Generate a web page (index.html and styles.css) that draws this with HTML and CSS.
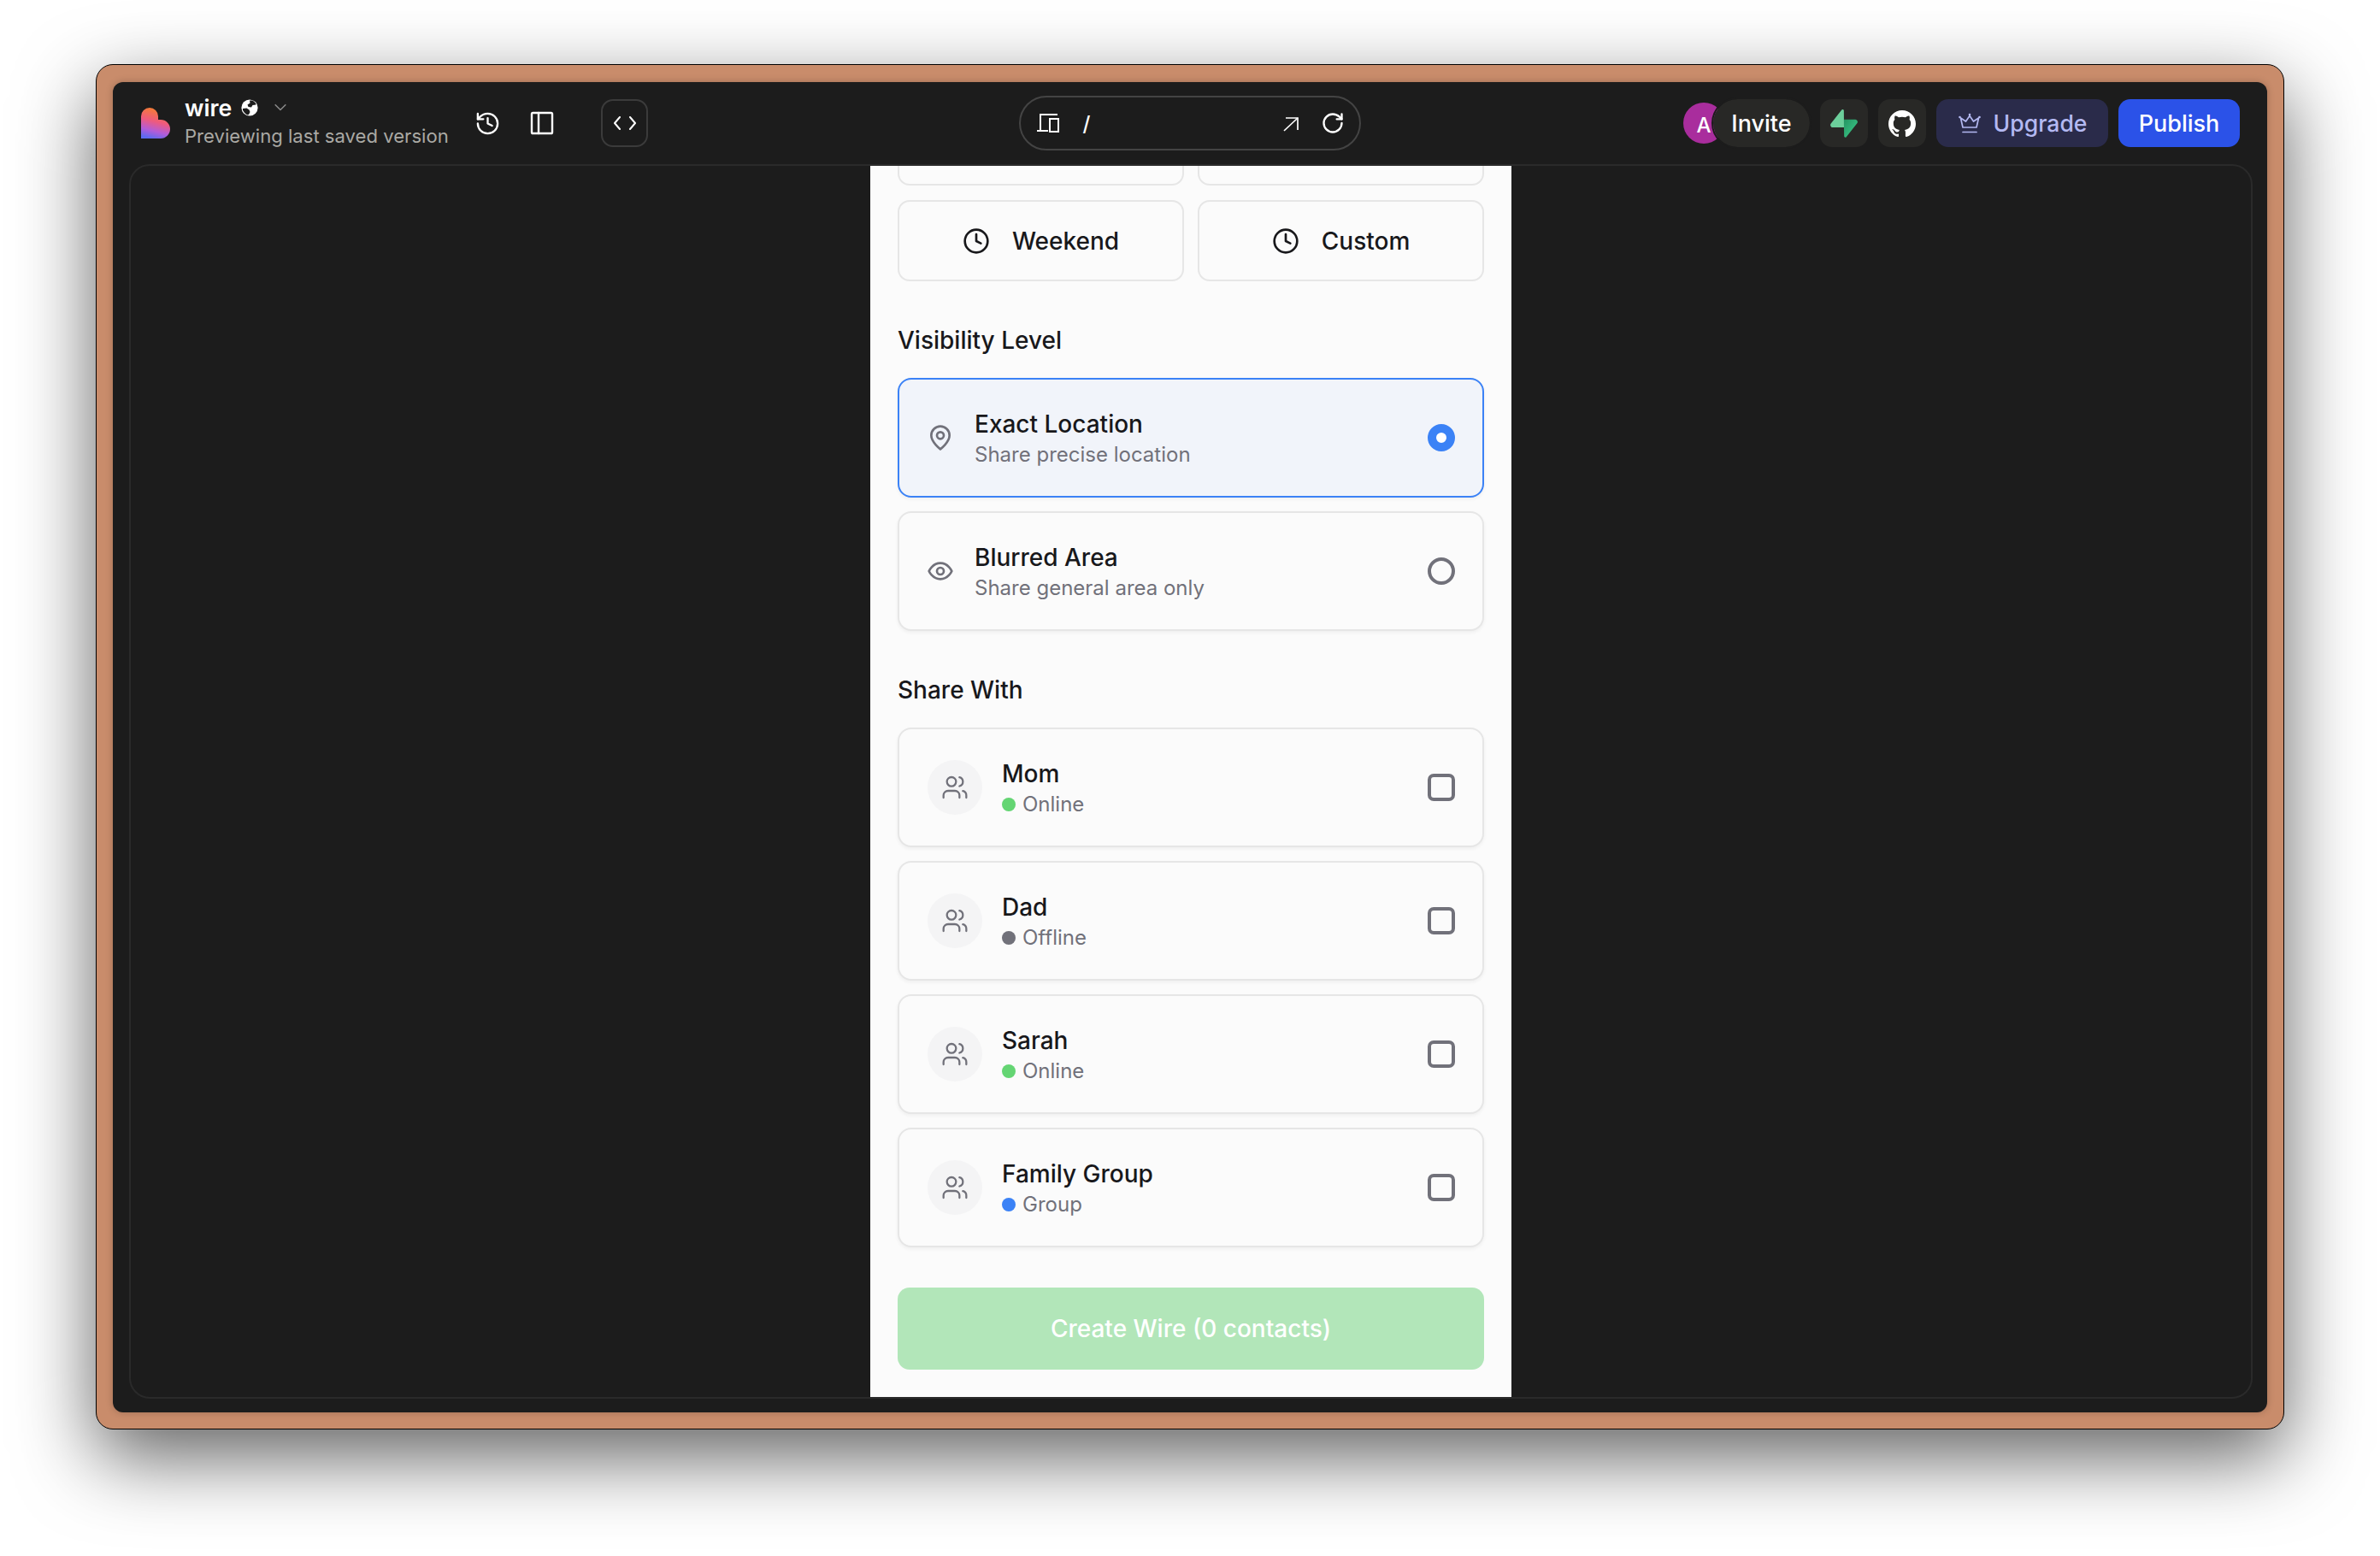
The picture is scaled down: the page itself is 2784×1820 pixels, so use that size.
FILE: index.html
```html
<!DOCTYPE html>
<html lang="en">
<head>
    <meta charset="UTF-8">
    <title>wire</title>
    <link rel="stylesheet" href="styles.css">
</head>
<body>
    <div class="window">
        <div class="inner">

            <header class="topbar">
                <div class="left-group">
                    <svg class="logo" viewBox="0 0 34 36">
                        <defs>
                            <linearGradient id="logograd" x1="0.6" y1="0" x2="0.35" y2="1">
                                <stop offset="0" stop-color="#f5812b"/>
                                <stop offset="0.45" stop-color="#ee5a7e"/>
                                <stop offset="0.75" stop-color="#b35cd8"/>
                                <stop offset="1" stop-color="#5d6af0"/>
                            </linearGradient>
                        </defs>
                        <path fill="url(#logograd)" d="M0 10a10 10 0 0 1 20 0v4h3a11 11 0 0 1 11 11c0 6-5 11-11 11H0Z"/>
                    </svg>
                    <div class="project">
                        <div class="project-name">
                            <span class="name">wire</span>
                            <svg class="globe" viewBox="0 0 20 20">
                                <circle cx="10" cy="10" r="9.600" fill="#fff"/>
                                <path fill="#1c1c1c" d="M10 1.500h3.500L17 4.500 17.500 6.500 13.500 7 12 9.500 8.500 9 7.500 6.500 10.500 4.500ZM2 11l4.500-.5 3 2L10.500 15 9 18l-2 .5-3-2.500-2-3Z"/>
                            </svg>
                            <svg class="icon chevron" viewBox="0 0 24 24"><path d="m5 8 7 7 7-7"/></svg>
                        </div>
                        <div class="project-status">Previewing last saved version</div>
                    </div>
                    <svg class="icon history" viewBox="0 0 24 24">
                        <path d="M3 12a9 9 0 1 0 9-9 9.750 9.750 0 0 0-6.740 2.740L3 8"/>
                        <path d="M3 3v5h5"/>
                        <path d="M12 7v5l4 2"/>
                    </svg>
                    <svg class="icon panel" viewBox="0 0 24 24">
                        <rect x="3" y="3" width="18" height="18" rx="1"/>
                        <path d="M9 3v18"/>
                    </svg>
                    <button class="code-btn">
                        <svg class="icon" viewBox="0 0 26 16"><path d="M7 1 1 8l6 7"/><path d="m19 1 6 7-6 7"/></svg>
                    </button>
                </div>

                <div class="address">
                    <svg class="icon devices" viewBox="0 0 28 22">
                        <path d="M25 1H5v19"/>
                        <path d="M1 20h13"/>
                        <rect x="16" y="6" width="10" height="15"/>
                    </svg>
                    <span class="slash">/</span>
                    <span class="address-fill"></span>
                    <svg class="icon arrow" viewBox="0 0 24 24"><path d="M6 6h14v14"/><path d="M4 21 20 6"/></svg>
                    <svg class="icon reload" viewBox="0 0 24 24">
                        <path d="M21 12a9 9 0 1 1-9-9c2.520 0 4.930 1 6.740 2.740L21 8"/>
                        <path d="M21 3v5h-5"/>
                    </svg>
                </div>

                <div class="right-group">
                    <div class="people">
                        <span class="avatar">A</span>
                        <button class="invite">Invite</button>
                    </div>
                    <button class="square-btn">
                        <svg class="brand" viewBox="0 0 109 113">
                            <defs>
                                <linearGradient id="boltgrad" x1="0" y1="0" x2="1" y2="1">
                                    <stop offset="0" stop-color="#249361"/>
                                    <stop offset="1" stop-color="#3ecf8e"/>
                                </linearGradient>
                            </defs>
                            <path fill="url(#boltgrad)" d="M63.700 110.300c-2.900 3.600-8.700 1.600-8.700-3L54 40h45.200c8.200 0 12.800 9.500 7.700 15.900Z"/>
                            <path fill="#6ccf9b" d="M45.300 2.100c2.900-3.600 8.700-1.600 8.700 2.900L54.500 72.300H9.800c-8.200 0-12.700-9.500-7.600-15.900Z"/>
                        </svg>
                    </button>
                    <button class="square-btn">
                        <svg class="brand" viewBox="0 0 24 24">
                            <path fill="#fff" d="M12 .297c-6.630 0-12 5.373-12 12 0 5.303 3.438 9.800 8.205 11.385.600.113.820-.258.820-.577 0-.285-.010-1.040-.015-2.040-3.338.724-4.042-1.610-4.042-1.610C4.422 18.070 3.633 17.700 3.633 17.700c-1.087-.744.084-.729.084-.729 1.205.084 1.838 1.236 1.838 1.236 1.070 1.835 2.809 1.305 3.495.998.108-.776.417-1.305.760-1.605-2.665-.300-5.466-1.332-5.466-5.930 0-1.310.465-2.380 1.235-3.220-.135-.303-.540-1.523.105-3.176 0 0 1.005-.322 3.300 1.230.960-.267 1.980-.399 3-.405 1.020.006 2.040.138 3 .405 2.280-1.552 3.285-1.230 3.285-1.230.645 1.653.240 2.873.120 3.176.765.840 1.230 1.910 1.230 3.220 0 4.610-2.805 5.625-5.475 5.920.420.360.810 1.096.810 2.220 0 1.606-.015 2.896-.015 3.286 0 .315.210.690.825.570C20.565 22.092 24 17.592 24 12.297c0-6.627-5.373-12-12-12"/>
                        </svg>
                    </button>
                    <button class="upgrade">
                        <svg class="icon crown" viewBox="0 0 28 24">
                            <path d="M14 3.500 18.500 10 24.500 6 22 17H6L3.500 6 9.500 10Z"/>
                            <path d="M6 22.500h16"/>
                            <circle class="crown-tip" cx="14" cy="2" r="1.300"/>
                            <circle class="crown-tip" cx="2.500" cy="5" r="1.300"/>
                            <circle class="crown-tip" cx="25.500" cy="5" r="1.300"/>
                        </svg>
                        Upgrade
                    </button>
                    <button class="publish">Publish</button>
                </div>
            </header>

            <div class="frame">
                <div class="phone">
                    <div class="phone-content">

                        <div class="time-grid">
                            <button class="time-btn"></button>
                            <button class="time-btn"></button>
                            <button class="time-btn">
                                <svg class="icon clock" viewBox="0 0 24 24"><circle cx="12" cy="12" r="10"/><path d="M12 6v6l4 2"/></svg>
                                Weekend
                            </button>
                            <button class="time-btn">
                                <svg class="icon clock" viewBox="0 0 24 24"><circle cx="12" cy="12" r="10"/><path d="M12 6v6l4 2"/></svg>
                                Custom
                            </button>
                        </div>

                        <h2 class="section-title">Visibility Level</h2>
                        <div class="card-list">
                            <div class="card card-active">
                                <svg class="icon level-icon" viewBox="0 0 24 24">
                                    <path d="M20 10c0 6-8 12-8 12s-8-6-8-12a8 8 0 0 1 16 0Z"/>
                                    <circle cx="12" cy="10" r="3"/>
                                </svg>
                                <div class="card-text">
                                    <div class="card-title">Exact Location</div>
                                    <div class="card-sub">Share precise location</div>
                                </div>
                                <span class="radio radio-on"></span>
                            </div>
                            <div class="card">
                                <svg class="icon level-icon" viewBox="0 0 24 24">
                                    <path d="M2 12s3-7 10-7 10 7 10 7-3 7-10 7-10-7-10-7Z"/>
                                    <circle cx="12" cy="12" r="3"/>
                                </svg>
                                <div class="card-text">
                                    <div class="card-title">Blurred Area</div>
                                    <div class="card-sub">Share general area only</div>
                                </div>
                                <span class="radio"></span>
                            </div>
                        </div>

                        <h2 class="section-title">Share With</h2>
                        <div class="card-list">
                            <div class="card">
                                <span class="contact-pic">
                                    <svg class="icon" viewBox="0 0 24 24"><path d="M16 21v-2a4 4 0 0 0-4-4H6a4 4 0 0 0-4 4v2"/><circle cx="9" cy="7" r="4"/><path d="M22 21v-2a4 4 0 0 0-3-3.870"/><path d="M16 3.130a4 4 0 0 1 0 7.750"/></svg>
                                </span>
                                <div class="card-text">
                                    <div class="card-title">Mom</div>
                                    <div class="card-sub"><span class="dot dot-green"></span>Online</div>
                                </div>
                                <span class="check"></span>
                            </div>
                            <div class="card">
                                <span class="contact-pic">
                                    <svg class="icon" viewBox="0 0 24 24"><path d="M16 21v-2a4 4 0 0 0-4-4H6a4 4 0 0 0-4 4v2"/><circle cx="9" cy="7" r="4"/><path d="M22 21v-2a4 4 0 0 0-3-3.870"/><path d="M16 3.130a4 4 0 0 1 0 7.750"/></svg>
                                </span>
                                <div class="card-text">
                                    <div class="card-title">Dad</div>
                                    <div class="card-sub"><span class="dot dot-grey"></span>Offline</div>
                                </div>
                                <span class="check"></span>
                            </div>
                            <div class="card">
                                <span class="contact-pic">
                                    <svg class="icon" viewBox="0 0 24 24"><path d="M16 21v-2a4 4 0 0 0-4-4H6a4 4 0 0 0-4 4v2"/><circle cx="9" cy="7" r="4"/><path d="M22 21v-2a4 4 0 0 0-3-3.870"/><path d="M16 3.130a4 4 0 0 1 0 7.750"/></svg>
                                </span>
                                <div class="card-text">
                                    <div class="card-title">Sarah</div>
                                    <div class="card-sub"><span class="dot dot-green"></span>Online</div>
                                </div>
                                <span class="check"></span>
                            </div>
                            <div class="card">
                                <span class="contact-pic">
                                    <svg class="icon" viewBox="0 0 24 24"><path d="M16 21v-2a4 4 0 0 0-4-4H6a4 4 0 0 0-4 4v2"/><circle cx="9" cy="7" r="4"/><path d="M22 21v-2a4 4 0 0 0-3-3.870"/><path d="M16 3.130a4 4 0 0 1 0 7.750"/></svg>
                                </span>
                                <div class="card-text">
                                    <div class="card-title">Family Group</div>
                                    <div class="card-sub"><span class="dot dot-blue"></span>Group</div>
                                </div>
                                <span class="check"></span>
                            </div>
                        </div>

                        <button class="create-btn">Create Wire (0 contacts)</button>
                    </div>
                </div>
            </div>

        </div>
    </div>
</body>
</html>
```

FILE: styles.css
```css
*
{
    box-sizing: border-box;
}

html, body
{
    margin: 0;
    height: 100%;
}

body
{
    background: #ffffff;
    padding: 75px 112px 148px 112px;
    font-family: "Inter", "Liberation Sans", sans-serif;
    overflow: hidden;
}

button
{
    font-family: inherit;
    border: none;
    padding: 0;
}

.icon
{
    fill: none;
    stroke: currentColor;
    stroke-width: 2;
    stroke-linecap: round;
    stroke-linejoin: round;
    flex: none;
    display: block;
}

.window
{
    height: 1597px;
    padding: 20px 19px 19px 19px;
    background: #c98c6b;
    border: 1px solid #000;
    border-radius: 20px;
    box-shadow: 0 32px 90px rgba(0, 0, 0, 0.62);
}

.inner
{
    height: 100%;
    background: #1c1c1c;
    border-radius: 12px;
    box-shadow: 0 0 8px rgba(0, 0, 0, 0.22);
    display: flex;
    flex-direction: column;
}

/* top bar */

.topbar
{
    height: 96px;
    flex: none;
    padding: 0 32px 0 33px;
    display: grid;
    grid-template-columns: 1fr 400px 1fr;
    align-items: center;
    color: #fff;
}

.left-group
{
    display: flex;
    align-items: center;
}

.logo
{
    width: 34px;
    height: 36px;
    flex: none;
    margin-right: 17px;
}

.project
{
    width: 308px;
    margin-right: 31px;
}

.project-name
{
    display: flex;
    align-items: center;
    height: 30px;
    margin-top: -5px;
}

.name
{
    font-size: 26.700px;
    font-weight: 600;
}

.globe
{
    width: 20px;
    height: 20px;
    margin-left: 11px;
}

.chevron
{
    width: 20px;
    height: 20px;
    margin-left: 16px;
    color: #8a8a8a;
    stroke-width: 1.8;
}

.project-status
{
    font-size: 22.100px;
    color: #aaa9a4;
    white-space: nowrap;
    margin-top: 5px;
}

.history
{
    width: 31px;
    height: 31px;
    margin-right: 32px;
    stroke-width: 1.8;
}

.panel
{
    width: 32px;
    height: 32px;
    margin-right: 53px;
    stroke-width: 1.8;
}

.code-btn
{
    width: 55px;
    height: 56px;
    border: 2px solid #3b3b3b;
    border-radius: 14px;
    background: transparent;
    color: #fff;
    display: flex;
    align-items: center;
    justify-content: center;
}

.code-btn svg
{
    width: 26px;
    height: 16px;
}

.address
{
    height: 64px;
    width: 400px;
    margin-left: -1px;
    border: 2px solid #444;
    border-radius: 32px;
    padding: 0 17px 0 18px;
    display: flex;
    align-items: center;
}

.devices
{
    width: 28px;
    height: 22px;
    stroke-linecap: butt;
    stroke-linejoin: miter;
}

.slash
{
    font-size: 24px;
    font-weight: 500;
    margin-left: 27px;
}

.address-fill
{
    flex: 1;
}

.arrow
{
    width: 24px;
    height: 24px;
    stroke-width: 1.700;
    stroke-linecap: butt;
    stroke-linejoin: miter;
    margin-right: 23px;
}

.reload
{
    width: 28px;
    height: 28px;
}

.right-group
{
    display: flex;
    align-items: center;
    justify-content: flex-end;
    gap: 12px;
}

.people
{
    display: flex;
    align-items: center;
}

.avatar
{
    width: 48px;
    height: 48px;
    border-radius: 50%;
    background: #a92d9d;
    color: #fff;
    font-size: 24px;
    font-weight: 500;
    display: flex;
    align-items: center;
    justify-content: center;
    padding-top: 4px;
}

.invite
{
    height: 56px;
    width: 113px;
    margin-left: -13px;
    border-radius: 28px;
    background: #282826;
    outline: 2px solid #1c1c1c;
    color: #fff;
    font-size: 27px;
    font-weight: 500;
    position: relative;
}

.square-btn
{
    width: 56px;
    height: 56px;
    border-radius: 14px;
    background: #282826;
    display: flex;
    align-items: center;
    justify-content: center;
}

.brand
{
    width: 32px;
    height: 33px;
}

.upgrade
{
    width: 201px;
    height: 56px;
    border-radius: 14px;
    background: #2a2b4a;
    color: #b4b9f2;
    font-size: 26.600px;
    font-weight: 500;
    display: flex;
    align-items: center;
    justify-content: center;
    gap: 14px;
}

.crown
{
    width: 28px;
    height: 24px;
    stroke-width: 1.700;
}

.crown-tip
{
    fill: currentColor;
    stroke: none;
}

.publish
{
    width: 142px;
    height: 56px;
    border-radius: 14px;
    background: #2b52e8;
    color: #fff;
    font-size: 27px;
    font-weight: 500;
}

/* preview frame */

.frame
{
    flex: 1;
    margin: 0 17px 16px 19px;
    border: 2px solid #2a2a2a;
    border-radius: 24px;
    display: flex;
    justify-content: center;
    min-height: 0;
}

.phone
{
    width: 750px;
    height: 100%;
    background: #fbfbfb;
    overflow: hidden;
    display: flex;
    flex-direction: column;
    justify-content: flex-end;
    flex: none;
}

.phone-content
{
    flex: none;
    padding: 0 32px 32px 32px;
    color: #18181b;
}

.time-grid
{
    display: grid;
    grid-template-columns: 1fr 1fr;
    gap: 17px 16px;
}

.time-btn
{
    height: 95px;
    border: 2px solid #e6e6e6;
    border-radius: 14px;
    background: #fbfbfb;
    color: #18181b;
    font-size: 28px;
    font-weight: 500;
    display: flex;
    align-items: center;
    justify-content: center;
    gap: 26px;
}

.clock
{
    width: 32px;
    height: 32px;
    stroke-width: 2;
}

.section-title
{
    font-size: 28px;
    font-weight: 500;
    margin: 52px 0 27px 0;
    line-height: 34px;
}

.card-list
{
    display: flex;
    flex-direction: column;
    gap: 16px;
}

.card
{
    height: 140px;
    border: 2px solid #e6e6e6;
    border-radius: 16px;
    background: #fbfbfb;
    box-shadow: 0 2px 4px rgba(0, 0, 0, 0.05);
    padding: 0 32px 0 33px;
    display: flex;
    align-items: center;
}

.card-active
{
    border-color: #3b82f6;
    background: #f1f4fa;
}

.level-icon
{
    width: 32px;
    height: 32px;
    margin-left: -1px;
    margin-right: 24px;
    color: #71717a;
}

.card-text
{
    flex: 1;
    margin-top: 1px;
}

.card-title
{
    font-size: 28px;
    font-weight: 500;
    line-height: 34px;
}

.card-sub
{
    font-size: 24px;
    color: #71717a;
    line-height: 30px;
    margin-top: 4px;
    display: flex;
    align-items: center;
}

.radio
{
    width: 32px;
    height: 32px;
    border-radius: 50%;
    border: 4px solid #71717a;
    flex: none;
}

.radio-on
{
    border: 10px solid #3b82f6;
    background: #fff;
}

.check
{
    width: 32px;
    height: 32px;
    border-radius: 7px;
    border: 4px solid #71717a;
    flex: none;
}

.contact-pic
{
    width: 64px;
    height: 64px;
    border-radius: 50%;
    background: #f4f4f5;
    color: #71717a;
    display: flex;
    align-items: center;
    justify-content: center;
    margin-right: 23px;
    flex: none;
}

.contact-pic svg
{
    width: 32px;
    height: 32px;
    stroke-width: 1.7;
}

.dot
{
    width: 16px;
    height: 16px;
    border-radius: 50%;
    margin-right: 8px;
    flex: none;
}

.dot-green
{
    background: #64d573;
}

.dot-grey
{
    background: #71717a;
}

.dot-blue
{
    background: #3b82f6;
}

.create-btn
{
    width: 100%;
    height: 96px;
    margin-top: 47px;
    border-radius: 14px;
    background: #b2e6b9;
    color: #fff;
    font-size: 28px;
    font-weight: 500;
}
```
